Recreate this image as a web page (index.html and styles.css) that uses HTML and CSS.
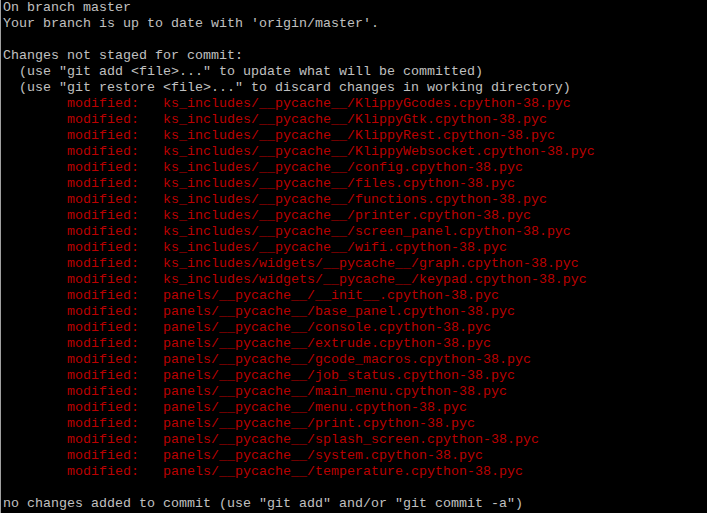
FILE: index.html
```html
<!DOCTYPE html>
<html>
<head>
<meta charset="utf-8">
<link rel="stylesheet" href="styles.css">
</head>
<body>
<pre class="term">On branch master
Your branch is up to date with 'origin/master'.

Changes not staged for commit:
  (use "git add &lt;file&gt;..." to update what will be committed)
  (use "git restore &lt;file&gt;..." to discard changes in working directory)
<span class="red">        modified:   ks_includes/__pycache__/KlippyGcodes.cpython-38.pyc
        modified:   ks_includes/__pycache__/KlippyGtk.cpython-38.pyc
        modified:   ks_includes/__pycache__/KlippyRest.cpython-38.pyc
        modified:   ks_includes/__pycache__/KlippyWebsocket.cpython-38.pyc
        modified:   ks_includes/__pycache__/config.cpython-38.pyc
        modified:   ks_includes/__pycache__/files.cpython-38.pyc
        modified:   ks_includes/__pycache__/functions.cpython-38.pyc
        modified:   ks_includes/__pycache__/printer.cpython-38.pyc
        modified:   ks_includes/__pycache__/screen_panel.cpython-38.pyc
        modified:   ks_includes/__pycache__/wifi.cpython-38.pyc
        modified:   ks_includes/widgets/__pycache__/graph.cpython-38.pyc
        modified:   ks_includes/widgets/__pycache__/keypad.cpython-38.pyc
        modified:   panels/__pycache__/__init__.cpython-38.pyc
        modified:   panels/__pycache__/base_panel.cpython-38.pyc
        modified:   panels/__pycache__/console.cpython-38.pyc
        modified:   panels/__pycache__/extrude.cpython-38.pyc
        modified:   panels/__pycache__/gcode_macros.cpython-38.pyc
        modified:   panels/__pycache__/job_status.cpython-38.pyc
        modified:   panels/__pycache__/main_menu.cpython-38.pyc
        modified:   panels/__pycache__/menu.cpython-38.pyc
        modified:   panels/__pycache__/print.cpython-38.pyc
        modified:   panels/__pycache__/splash_screen.cpython-38.pyc
        modified:   panels/__pycache__/system.cpython-38.pyc
        modified:   panels/__pycache__/temperature.cpython-38.pyc</span>

no changes added to commit (use "git add" and/or "git commit -a")</pre>
</body>
</html>
```
FILE: styles.css
```css
html, body {
  margin: 0;
  padding: 0;
  background: #000;
  height: 100%;
  overflow: hidden;
}
body {
  border-left: 1px solid #a0a0a0;
  box-sizing: border-box;
}
.term {
  margin: 0;
  padding: 0 0 0 2px;
  font-family: "Liberation Mono", "Courier New", monospace;
  font-size: 13.333px;
  line-height: 16px;
  color: #c0c0c0;
  white-space: pre;
}
.red {
  color: #bb0000;
}
```
